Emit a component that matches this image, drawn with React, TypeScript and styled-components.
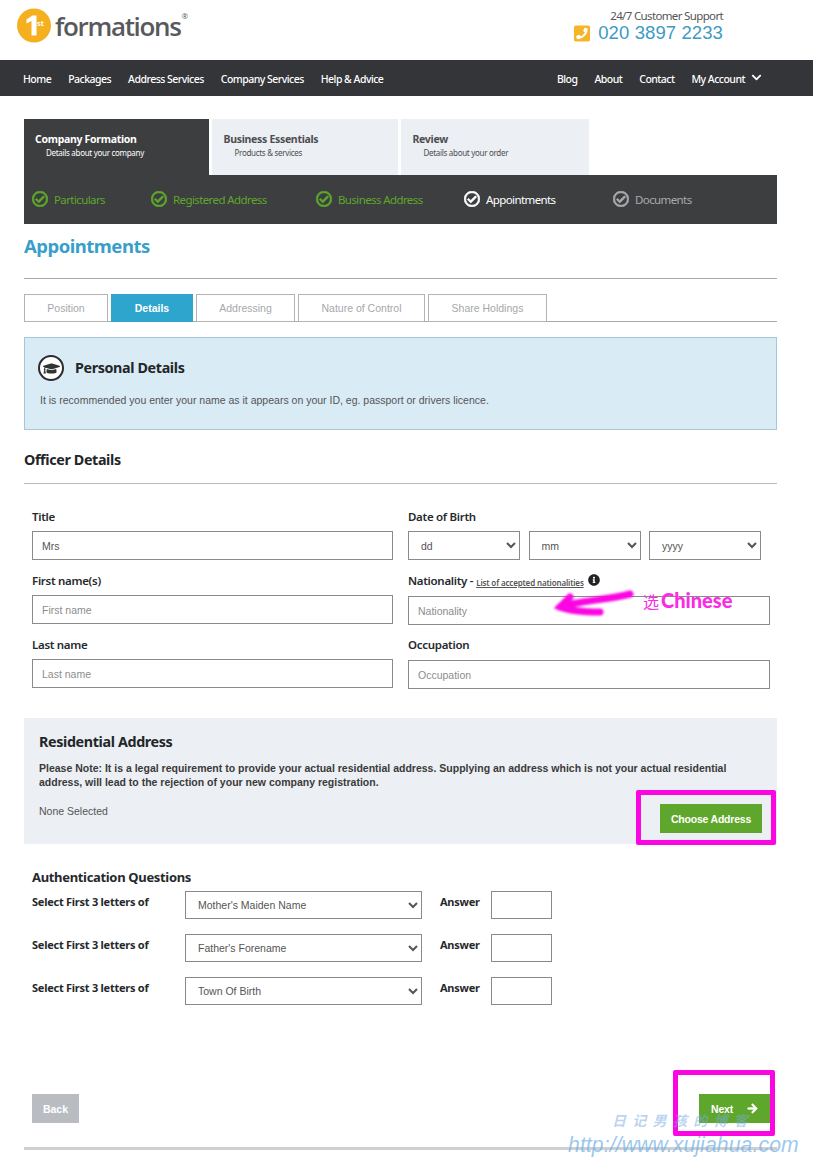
import React from "react";
import styled, { createGlobalStyle } from "styled-components";
import { FaRegCheckCircle, FaGraduationCap, FaPhoneSquare, FaInfoCircle, FaArrowRight, FaChevronDown } from "react-icons/fa";

const Global = createGlobalStyle`
  html, body { margin: 0; padding: 0; background: #fff; }
  * { box-sizing: border-box; }
  body { font-family: "Liberation Sans", Arial, sans-serif; }
`;
const HEAD = `"Noto Sans", "Open Sans", sans-serif`;

const Page = styled.div`
  position: relative; width: 813px; height: 1158px; overflow: hidden; background: #fff;
`;
const Header = styled.header`
  height: 60px; display: flex; justify-content: space-between; padding: 8px 90px 0 17px;
`;
const Logo = styled.div`display: flex; align-items: flex-start; gap: 4px;`;
const LogoWord = styled.span`
  font: 600 26px/36px "Open Sans", sans-serif; letter-spacing: -1.35px; color: #58595b;
`;
const Reg = styled.sup`font: 400 8px/8px "Open Sans", sans-serif; vertical-align: 17px; letter-spacing: 0; margin-left: 1px;`;
const Support = styled.div`display: flex; flex-direction: column; align-items: flex-end;`;
const SupportLabel = styled.div`
  font: 400 11.5px/15px ${HEAD}; letter-spacing: -0.65px; color: #555;
`;
const Phone = styled.div`
  display: flex; align-items: center; gap: 8px; font: 400 18.5px/20px "Liberation Sans", sans-serif; color: #3d9ac2; letter-spacing: 0.1px;
  svg { color: #f5b526; width: 16px; height: 19px; }
`;
const Nav = styled.nav`
  height: 36px; background: #333538; display: flex; justify-content: space-between; align-items: center; padding: 2px 50px 0 23px;
`;
const NavGroup = styled.div`display: flex; gap: 17px; align-items: center;`;
const NavLink = styled.a`
  font: 500 10.5px/14px ${HEAD}; letter-spacing: -0.52px; color: #fff; display: flex; align-items: center; gap: 5px;
  svg { width: 13px; height: 11px; margin-top: -4px; }
`;
const Main = styled.main`padding: 23px 36px 0 24px;`;
const WizardTabs = styled.div`display: flex; gap: 3px;`;
const WizardTab = styled.div<{ $active?: boolean; $w: number }>`
  width: ${p => p.$w}px; height: 56px; padding: 13px 0 0 ${p => (p.$active ? 11 : 11.5)}px;
  background: ${p => (p.$active ? "#3d3e40" : "#eceff3")}; color: ${p => (p.$active ? "#fff" : "#4c4e50")};
`;
const TabTitle = styled.div`font: 700 10.5px/14px ${HEAD}; letter-spacing: -0.3px;`;
const TabSub = styled.div`font: 400 8px/14px ${HEAD}; letter-spacing: -0.3px; margin-left: 11px;`;
const Steps = styled.div`
  height: 49px; background: #3d3e40; display: grid; grid-template-columns: 119px 165px 148px 149px auto; align-items: center; padding: 1px 0 0 8px;
`;
const Step = styled.div<{ $c: string }>`
  display: flex; align-items: center; gap: 6px; color: ${p => p.$c}; font: 400 11.5px/16px ${HEAD}; letter-spacing: -0.6px;
  svg { width: 16px; height: 16px; margin-top: -3px; stroke: currentColor; stroke-width: 26; }
`;
const PageTitle = styled.h1`
  margin: 10px 0 0; height: 45px; font: 700 18.5px/24px ${HEAD}; letter-spacing: -0.5px; color: #3a9fc8; border-bottom: 1px solid #aaa;
`;
const SubTabs = styled.div`
  display: flex; gap: 3px; margin-top: 15px; height: 28px; border-bottom: 1px solid #aaa;
`;
const SubTab = styled.div<{ $active?: boolean; $w: number }>`
  width: ${p => p.$w}px; height: 28px; display: flex; align-items: center; justify-content: center; font: ${p => (p.$active ? 700 : 400)} 10.5px/14px "Liberation Sans", sans-serif;
  background: ${p => (p.$active ? "#2ea5cd" : "#fff")}; color: ${p => (p.$active ? "#fff" : "#a5a8ab")}; border: 1px solid ${p => (p.$active ? "#2ea5cd" : "#b4b4b4")};
`;
const InfoBox = styled.section`
  margin-top: 15px; height: 93px; background: #d9ebf5; border: 1px solid #a9c5d8; padding: 17px 15px 0;
`;
const InfoHead = styled.div`display: flex; align-items: center; gap: 11px; margin-left: -2px;`;
const CapIcon = styled.span`
  width: 26px; height: 26px; border-radius: 50%; border: 2px solid #2c2c2e; background: #fff; display: flex; align-items: center; justify-content: center;
  svg { width: 17px; height: 15px; color: #333; }
`;
const SectionTitle = styled.h2`
  margin: 0; font: 700 14.3px/20px ${HEAD}; letter-spacing: -0.36px; color: #222629;
`;
const InfoText = styled.p`margin: 12px 0 0; font: 400 10.5px/14px "Liberation Sans", sans-serif; color: #555;`;
const OfficerTitle = styled(SectionTitle)`
  margin-top: 20px; height: 34px; border-bottom: 1px solid #bbb;
`;
const FormGrid = styled.div`
  display: grid; grid-template-columns: 361px 362px; column-gap: 15px; padding: 27px 0 0 8px;
`;
const Col = styled.div`display: flex; flex-direction: column; gap: 14px;`;
const Field = styled.div<{ $shift?: number }>`display: flex; flex-direction: column; margin-top: ${p => p.$shift ?? 0}px;`;
const Label = styled.label`
  font: 600 11.5px/16px ${HEAD}; letter-spacing: -0.3px; color: #26292c; height: 20px; display: flex; gap: 3px; align-items: flex-start; position: relative; top: -2px;
`;
const Small = styled.a`
  font: 600 8px/16px ${HEAD}; letter-spacing: -0.15px; color: #555; text-decoration: underline; padding-top: 2px;
`;
const InfoGlyph = styled(FaInfoCircle)`width: 12px; height: 12px; color: #222; margin: 1px 0 0 1px;`;
const Input = styled.input<{ $nudge?: number }>`
  width: 100%; height: 29px; margin-top: ${p => p.$nudge ?? 0}px; border: 1px solid #8a8a8a; padding: 0 9px; font: 400 10.5px "Liberation Sans", sans-serif; color: #555; background: #fff; border-radius: 0; outline: none;
  &::placeholder { color: #8d8d8d; opacity: 1; }
`;
const DateRow = styled.div`display: flex; gap: 8.5px;`;
const Select = styled.select<{ $w: number }>`
  width: ${p => p.$w}px; height: 29px; border: 1px solid #8a8a8a; padding: 0 8px; font: 400 10.5px "Liberation Sans", sans-serif; color: #555; background: #fff; border-radius: 0;
`;
const Residential = styled.section`
  margin-top: 29px; height: 126px; background: #eceff3; padding: 14px 15px 0;
`;
const Note = styled.p`margin: 9px 0 0; font: 700 10.5px/14px "Liberation Sans", sans-serif; color: #3a3a3a; width: 710px;`;
const ResRow = styled.div`display: flex; justify-content: space-between; align-items: flex-start; margin-top: 15px;`;
const NoneSel = styled.span`font: 400 10.5px/14px "Liberation Sans", sans-serif; color: #555;`;
const GreenBtn = styled.button<{ $w: number }>`
  width: ${p => p.$w}px; height: 29px; border: 0; background: #5fa72c; color: #fff; font: 700 10.5px "Liberation Sans", sans-serif; display: flex; align-items: center; justify-content: center; gap: 14px; padding: 0; letter-spacing: -0.2px;
  svg { width: 11px; height: 11px; stroke: currentColor; stroke-width: 30; }
`;
const Auth = styled.section`margin-top: 23px; padding-left: 8px;`;
const AuthTitle = styled.h3`margin: 0 0 4px; font: 700 13px/20px ${HEAD}; letter-spacing: -0.33px; color: #26292c;`;
const AuthRows = styled.div`display: flex; flex-direction: column; gap: 15px;`;
const AuthRow = styled.div`display: grid; grid-template-columns: 153px 237px 69px 61px; height: 28px;`;
const AuthLabel = styled.span`font: 700 11px/14px ${HEAD}; letter-spacing: -0.25px; color: #26292c; margin-top: 4px;`;
const AnswerLabel = styled(AuthLabel)`padding-left: 18px;`;
const AuthSelect = styled.select`
  height: 28px; width: 237px; border: 1px solid #8a8a8a; padding: 0 8px; font: 400 10.5px "Liberation Sans", sans-serif; color: #555; background: #fff; border-radius: 0;
`;
const AnswerInput = styled.input`height: 28px; width: 61px; border: 1px solid #8a8a8a; background: #fff; outline: none;`;
const BtnRow = styled.div`display: flex; justify-content: space-between; margin-top: 89px; padding: 0 7px 0 8px;`;
const BackBtn = styled.button`
  width: 47px; height: 29px; border: 0; background: #b9bdc2; color: #fff; font: 700 10.5px "Liberation Sans", sans-serif; padding: 0;
`;
const Foot = styled.hr`margin: 24px 0 0; height: 3px; background: #cfcfcf; border: 0;`;
const Highlight = styled.div<{ $l: number; $t: number; $w: number; $h: number }>`
  position: absolute; left: ${p => p.$l}px; top: ${p => p.$t}px; width: ${p => p.$w}px; height: ${p => p.$h}px; border: 5px solid #fb05e3; border-radius: 2px; pointer-events: none;
`;
const Scribble = styled.svg`position: absolute; left: 552px; top: 586px; width: 86px; height: 34px; filter: blur(1px);`;
const Annot = styled.div`
  position: absolute; left: 643px; top: 589px; color: #fb2ae6; font: 400 16px/22px "Noto Sans CJK SC", sans-serif; white-space: nowrap;
  b { font: 900 20px/22px "Lato", "Noto Sans", sans-serif; margin-left: 2px; }
`;
const WaterCn = styled.div`
  position: absolute; left: 612px; top: 1110px; font: italic 700 14px/20px "Noto Sans CJK SC", sans-serif; letter-spacing: 6.3px; color: rgba(120,170,225,0.5); white-space: nowrap;
`;
const WaterEn = styled.div`
  position: absolute; left: 568px; top: 1132px; font: italic 400 21.2px/26px "Liberation Sans", sans-serif; letter-spacing: 0.1px; color: rgba(110,175,235,0.7); white-space: nowrap;
`;

const check = <FaRegCheckCircle />;
const GREEN = "#5fa72c";

export default function App() {
  return (
    <Page>
      <Global />
      <Header>
        <Logo>
          <svg width="34" height="35" viewBox="0 0 34 35" aria-hidden="true">
            <circle cx="17" cy="17.5" r="17" fill="#f5b01f" />
            <path d="M9.5 11.5 L15.5 7.5 H19.5 V27.5 H14.5 V13 L9.5 15.5 Z" fill="#fff" />
            <text x="20" y="18" fontSize="7.5" fontWeight="700" fontFamily="Open Sans" fill="#fff">st</text>
          </svg>
          <LogoWord>formations<Reg>®</Reg></LogoWord>
        </Logo>
        <Support>
          <SupportLabel>24/7 Customer Support</SupportLabel>
          <Phone><FaPhoneSquare />020 3897 2233</Phone>
        </Support>
      </Header>
      <Nav>
        <NavGroup>
          {["Home", "Packages", "Address Services", "Company Services", "Help & Advice"].map(n => <NavLink key={n}>{n}</NavLink>)}
        </NavGroup>
        <NavGroup>
          {["Blog", "About", "Contact"].map(n => <NavLink key={n}>{n}</NavLink>)}
          <NavLink>My Account <FaChevronDown /></NavLink>
        </NavGroup>
      </Nav>
      <Main>
        <WizardTabs>
          <WizardTab $active $w={185}><TabTitle>Company Formation</TabTitle><TabSub>Details about your company</TabSub></WizardTab>
          <WizardTab $w={186}><TabTitle>Business Essentials</TabTitle><TabSub>Products &amp; services</TabSub></WizardTab>
          <WizardTab $w={188}><TabTitle>Review</TabTitle><TabSub>Details about your order</TabSub></WizardTab>
        </WizardTabs>
        <Steps>
          <Step $c={GREEN}>{check}Particulars</Step>
          <Step $c={GREEN}>{check}Registered Address</Step>
          <Step $c={GREEN}>{check}Business Address</Step>
          <Step $c="#fff">{check}Appointments</Step>
          <Step $c="#a8abae">{check}Documents</Step>
        </Steps>
        <PageTitle>Appointments</PageTitle>
        <SubTabs>
          <SubTab $w={84}>Position</SubTab>
          <SubTab $active $w={82}>Details</SubTab>
          <SubTab $w={99}>Addressing</SubTab>
          <SubTab $w={127}>Nature of Control</SubTab>
          <SubTab $w={119}>Share Holdings</SubTab>
        </SubTabs>
        <InfoBox>
          <InfoHead>
            <CapIcon><FaGraduationCap /></CapIcon>
            <SectionTitle>Personal Details</SectionTitle>
          </InfoHead>
          <InfoText>It is recommended you enter your name as it appears on your ID, eg. passport or drivers licence.</InfoText>
        </InfoBox>
        <OfficerTitle>Officer Details</OfficerTitle>
        <FormGrid>
          <Col>
            <Field><Label>Title</Label><Input defaultValue="Mrs" /></Field>
            <Field $shift={1}><Label>First name(s)</Label><Input placeholder="First name" /></Field>
            <Field $shift={1}><Label>Last name</Label><Input placeholder="Last name" /></Field>
          </Col>
          <Col>
            <Field>
              <Label>Date of Birth</Label>
              <DateRow>
                <Select $w={112}><option>dd</option></Select>
                <Select $w={112}><option>mm</option></Select>
                <Select $w={112}><option>yyyy</option></Select>
              </DateRow>
            </Field>
            <Field $shift={1}>
              <Label>Nationality - <Small>List of accepted nationalities</Small><InfoGlyph /></Label>
              <Input placeholder="Nationality" $nudge={1} />
            </Field>
            <Field><Label>Occupation</Label><Input placeholder="Occupation" $nudge={1} /></Field>
          </Col>
        </FormGrid>
        <Residential>
          <SectionTitle>Residential Address</SectionTitle>
          <Note>Please Note: It is a legal requirement to provide your actual residential address. Supplying an address which is not your actual residential address, will lead to the rejection of your new company registration.</Note>
          <ResRow>
            <NoneSel>None Selected</NoneSel>
            <GreenBtn $w={102}>Choose Address</GreenBtn>
          </ResRow>
        </Residential>
        <Auth>
          <AuthTitle>Authentication Questions</AuthTitle>
          <AuthRows>
            {["Mother's Maiden Name", "Father's Forename", "Town Of Birth"].map(q => (
              <AuthRow key={q}>
                <AuthLabel>Select First 3 letters of</AuthLabel>
                <AuthSelect><option>{q}</option></AuthSelect>
                <AnswerLabel>Answer</AnswerLabel>
                <AnswerInput />
              </AuthRow>
            ))}
          </AuthRows>
        </Auth>
        <BtnRow>
          <BackBtn>Back</BackBtn>
          <GreenBtn $w={71}>Next <FaArrowRight /></GreenBtn>
        </BtnRow>
        <Foot />
      </Main>
      <Scribble viewBox="0 0 86 34" aria-hidden="true">
        <path d="M78 8 C55 14 25 15 8 21" stroke="#fb05e3" strokeWidth="7" fill="none" strokeLinecap="round" />
        <path d="M18 11 L8 21 C18 25 32 26 48 26" stroke="#fb05e3" strokeWidth="7" fill="none" strokeLinecap="round" />
      </Scribble>
      <Annot>选<b>Chinese</b></Annot>
      <Highlight $l={636} $t={790} $w={140} $h={55} />
      <Highlight $l={673} $t={1070} $w={102} $h={66} />
      <WaterCn>日记男孩的博客</WaterCn>
      <WaterEn>http://www.xujiahua.com</WaterEn>
    </Page>
  );
}
